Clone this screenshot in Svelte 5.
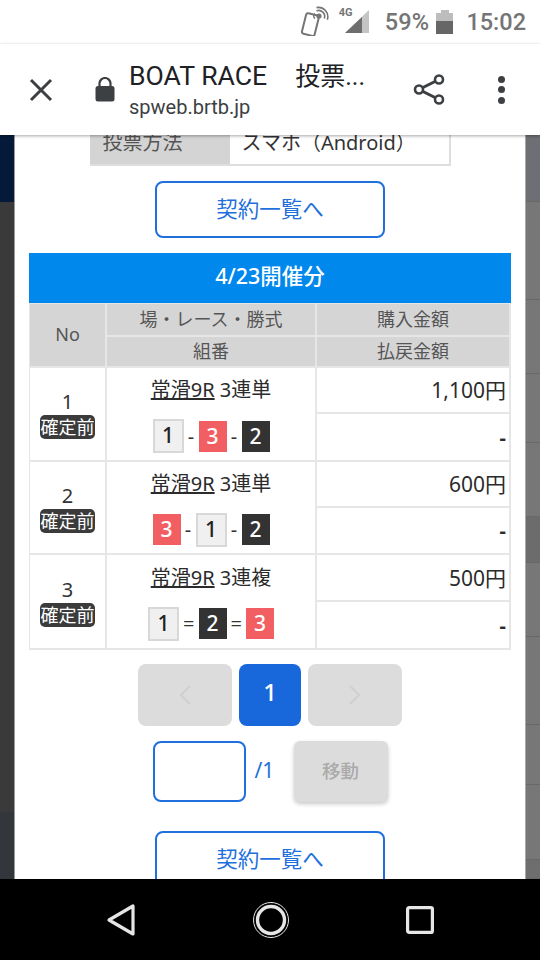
<script>
  const leftStrip = [
    { h: 67, color: "#041a38" },
    { h: 610, color: "#3a3a3a" },
    { h: 67, color: "#33363b" }
  ];
  const rightStrip = [
    { h: 67, color: "#6d6f74" },
    { h: 98, color: "#777777" },
    { h: 74, color: "#777777" },
    { h: 69, color: "#777777" },
    { h: 74, color: "#777777" },
    { h: 46, color: "#6c6c6c" },
    { h: 74, color: "#777777" },
    { h: 88, color: "#777777" },
    { h: 60, color: "#777777" },
    { h: 75, color: "#777777" },
    { h: 19, color: "#6e6e6e" }
  ];

  const rows = [
    { no: 1, bet: "3連単", sep: "-", picks: [1, 3, 2], buy: "1,100円" },
    { no: 2, bet: "3連単", sep: "-", picks: [3, 1, 2], buy: "600円" },
    { no: 3, bet: "3連複", sep: "=", picks: [1, 2, 3], buy: "500円" }
  ];
</script>

<div class="screen">
  <div class="status">
    <svg class="nfc" width="32" height="30" viewBox="0 0 32 30">
      <rect x="5" y="8" width="13" height="21" rx="2" transform="rotate(14 11 18)" fill="none" stroke="#757575" stroke-width="2" />
      <circle cx="20" cy="10" r="2.6" fill="#757575" />
      <path d="M17.5 4.8a6 6 0 0 1 7.8 7.6" fill="none" stroke="#757575" stroke-width="1.6" />
      <path d="M17.5 1.6a9.4 9.4 0 0 1 10.8 12.2" fill="none" stroke="#757575" stroke-width="1.6" />
      <path d="M16 7.6a3 3 0 0 0 0 5" fill="none" stroke="#757575" stroke-width="1.4" />
    </svg>
    <div class="signal">
      <span class="net">4G</span>
      <svg width="24" height="24" viewBox="0 0 24 24">
        <path d="M0 23 24 0v23z" fill="#c4c4c4" />
        <path d="M0 23 17 7v16z" fill="#6e6e6e" />
      </svg>
    </div>
    <span class="pct">59%</span>
    <div class="battery"><div class="battery-cap"></div><div class="battery-body"><div class="battery-fill"></div></div></div>
    <span class="time">15:02</span>
  </div>

  <header class="toolbar">
    <svg class="close" width="24" height="24" viewBox="0 0 24 24">
      <path d="M2 2 22 22M22 2 2 22" stroke="#3c4043" stroke-width="3" fill="none" />
    </svg>
    <svg class="lock" width="20" height="25" viewBox="0 0 20 25">
      <path d="M4.5 10V6.5a5.5 5.5 0 0 1 11 0V10" fill="none" stroke="#3c4043" stroke-width="2.2" />
      <rect x="0.5" y="9" width="19" height="15.5" rx="2.5" fill="#3c4043" />
    </svg>
    <div class="page-title">
      <div class="title">BOAT RACE<span class="title-rest">投票...</span></div>
      <div class="url">spweb.brtb.jp</div>
    </div>
    <svg class="share" width="32" height="33" viewBox="0 0 32 33">
      <path d="M26 6.5 6 16.5l20 10" fill="none" stroke="#3c4043" stroke-width="3" />
      <circle cx="26" cy="6.5" r="4" fill="#fff" stroke="#3c4043" stroke-width="2.6" />
      <circle cx="6" cy="16.5" r="4" fill="#fff" stroke="#3c4043" stroke-width="2.6" />
      <circle cx="26" cy="26.5" r="4" fill="#fff" stroke="#3c4043" stroke-width="2.6" />
    </svg>
    <div class="dots"><i></i><i></i><i></i></div>
  </header>

  <div class="content">
    <div class="strip strip-left">
      {#each leftStrip as s}
        <div class="block" style={`height:${s.h}px;background:${s.color}`}></div>
      {/each}
    </div>

    <main class="main">
      <div class="info">
        <div class="info-label">投票方法</div>
        <div class="info-value">スマホ（Android）</div>
      </div>

      <button class="list-btn">契約一覧へ</button>

      <div class="date-head">4/23開催分</div>

      <div class="grid">
        <div class="cell head span2">No</div>
        <div class="cell head">場・レース・勝式</div>
        <div class="cell head">購入金額</div>
        <div class="cell head col2">組番</div>
        <div class="cell head">払戻金額</div>

        {#each rows as r}
          <div class="cell no span2">
            <span class="no-num">{r.no}</span>
            <span class="state">確定前</span>
          </div>
          <div class="cell course span2">
            <div class="course-name"><u>常滑9R</u> {r.bet}</div>
            <div class="picks">
              {#each r.picks as p, i}
                {#if i > 0}<span class="sep" class:eq={r.sep === "="}>{r.sep}</span>{/if}
                <span class={`pick pick-${p}`}>{p}</span>
              {/each}
            </div>
          </div>
          <div class="cell amount">{r.buy}</div>
          <div class="cell amount payout">-</div>
        {/each}
      </div>

      <div class="pager">
        <div class="page-btn wide">
          <svg width="14" height="22" viewBox="0 0 14 22"><path d="M12 2 3 11l9 9" fill="none" stroke="#cfcfcf" stroke-width="2" /></svg>
        </div>
        <div class="page-btn current">1</div>
        <div class="page-btn wide">
          <svg width="14" height="22" viewBox="0 0 14 22"><path d="M2 2l9 9-9 9" fill="none" stroke="#cfcfcf" stroke-width="2" /></svg>
        </div>
      </div>

      <div class="goto">
        <div class="goto-input"></div>
        <span class="goto-total">/1</span>
        <div class="goto-btn">移動</div>
      </div>

      <button class="list-btn bottom">契約一覧へ</button>
    </main>

    <div class="strip strip-right">
      {#each rightStrip as s}
        <div class="block line" style={`height:${s.h}px;background:${s.color}`}></div>
      {/each}
    </div>
  </div>

  <nav class="navbar">
    <svg width="30" height="34" viewBox="0 0 30 34">
      <path d="M27 3v28L3 17z" fill="none" stroke="#e6e6e6" stroke-width="3.2" stroke-linejoin="round" />
    </svg>
    <svg width="38" height="38" viewBox="0 0 38 38">
      <circle cx="19" cy="19" r="17.5" fill="none" stroke="#e6e6e6" stroke-width="1" />
      <circle cx="19" cy="19" r="13.5" fill="none" stroke="#e6e6e6" stroke-width="3.4" />
    </svg>
    <svg width="28" height="28" viewBox="0 0 28 28">
      <rect x="1.6" y="1.6" width="24.8" height="24.8" rx="1.5" fill="none" stroke="#e6e6e6" stroke-width="3.2" />
    </svg>
  </nav>
</div>

<style>
  :global(body) {
    margin: 0;
  }

  .screen {
    width: 540px;
    height: 960px;
    display: flex;
    flex-direction: column;
    overflow: hidden;
    font-family: "Noto Sans", "Noto Sans CJK JP", sans-serif;
    background: #fff;
  }

  .status {
    height: 44px;
    flex: none;
    display: flex;
    align-items: center;
    justify-content: flex-end;
    padding-right: 14px;
    box-sizing: border-box;
    color: #757575;
    font-family: Roboto, sans-serif;
    font-weight: 500;
  }

  .nfc {
    margin-right: 13px;
    margin-top: -2px;
  }

  .signal {
    position: relative;
    width: 25px;
    height: 24px;
    margin-right: 16px;
  }

  .signal svg {
    position: absolute;
    right: 0;
    top: 0;
  }

  .net {
    position: absolute;
    left: -5px;
    top: -4px;
    font-size: 11px;
    font-weight: 700;
    color: #757575;
    z-index: 1;
  }

  .pct {
    font-size: 23.5px;
    letter-spacing: 0.2px;
  }

  .battery {
    width: 17px;
    margin-left: 7px;
    margin-right: 13px;
    display: flex;
    flex-direction: column;
    align-items: center;
  }

  .battery-cap {
    width: 8px;
    height: 3px;
    background: #bdbdbd;
  }

  .battery-body {
    width: 17px;
    height: 21px;
    background: #bdbdbd;
    display: flex;
    align-items: flex-end;
  }

  .battery-fill {
    width: 100%;
    height: 13px;
    background: #666;
  }

  .time {
    font-size: 23.5px;
  }

  .toolbar {
    height: 91px;
    flex: none;
    display: flex;
    align-items: center;
    background: #fff;
    box-shadow: 0 1px 3px rgba(0, 0, 0, 0.35);
    position: relative;
    z-index: 2;
    padding-left: 29px;
    box-sizing: border-box;
  }

  .lock {
    margin-left: 42px;
  }

  .page-title {
    margin-left: 14px;
    width: 270px;
  }

  .title {
    font-family: Roboto, "Noto Sans CJK JP", sans-serif;
    font-size: 26.6px;
    line-height: 32px;
    color: #202124;
    white-space: nowrap;
  }

  .title-rest {
    margin-left: 28px;
    font-size: 25px;
  }

  .url {
    font-family: Roboto, sans-serif;
    font-size: 20px;
    line-height: 26px;
    color: #3c4043;
    margin-top: 1px;
  }

  .share {
    margin-left: 14px;
  }

  .dots {
    margin-left: 53px;
    display: flex;
    flex-direction: column;
    gap: 3.5px;
  }

  .dots i {
    display: block;
    width: 7px;
    height: 7px;
    border-radius: 50%;
    background: #3c4043;
  }

  .content {
    flex: 1;
    min-height: 0;
    display: flex;
    overflow: hidden;
  }

  .strip {
    width: 15px;
    flex: none;
  }

  .strip-left {
    border-right: 1px solid #9a9a9a;
    box-sizing: border-box;
  }

  .strip-right {
    border-left: 1px solid #a8a8a8;
    box-sizing: border-box;
  }

  .block {
    box-sizing: border-box;
  }

  .line {
    border-bottom: 1px solid #686868;
  }

  .main {
    width: 510px;
    flex: none;
    background: #fff;
    display: flex;
    flex-direction: column;
    align-items: center;
  }

  .info {
    margin-top: -14px;
    flex: none;
    width: 361px;
    height: 45px;
    display: flex;
    font-size: 20px;
    box-sizing: border-box;
    border-bottom: 2px solid #dedede;
  }

  .info-label {
    width: 140px;
    background: #d4d4d4;
    color: #555;
    padding-left: 13px;
    box-sizing: border-box;
    line-height: 43px;
    margin-right: 1px;
  }

  .info-value {
    flex: 1;
    padding-left: 11px;
    color: #333;
    line-height: 43px;
    border-right: 2px solid #dedede;
  }

  .list-btn {
    flex: none;
    display: block;
    width: 230px;
    height: 57px;
    margin-top: 15px;
    background: #fff;
    border: 2px solid #1f6fdc;
    border-radius: 8px;
    color: #1f6fdc;
    font-family: "Noto Sans CJK JP", sans-serif;
    font-size: 21.5px;
    padding: 0 0 4px;
  }

  .list-btn.bottom {
    margin-top: 29px;
  }

  .date-head {
    flex: none;
    width: 482px;
    height: 50px;
    margin-top: 15px;
    background: #0088ec;
    color: #fff;
    font-size: 21.5px;
    font-weight: 500;
    line-height: 46px;
    text-align: center;
  }

  .grid {
    flex: none;
    width: 482px;
    box-sizing: border-box;
    display: grid;
    grid-template-columns: 75px 208px 192px;
    grid-template-rows: 31px 29px 44px 46px 44px 45px 45px 46px;
    gap: 2px;
    padding: 1px 2px 2px 1px;
    background: #e6e6e6;
  }

  .cell {
    background: #fff;
    display: flex;
    align-items: center;
    justify-content: center;
    color: #333;
    min-width: 0;
  }

  .span2 {
    grid-row: span 2;
  }

  .col2 {
    grid-column: 2;
  }

  .head {
    background: #d5d5d5;
    color: #555;
    font-size: 18px;
    padding-bottom: 3px;
    box-sizing: border-box;
  }

  .no {
    flex-direction: column;
  }

  .no-num {
    font-size: 20px;
    line-height: 26px;
  }

  .state {
    width: 55px;
    height: 24px;
    background: #3b3b3b;
    color: #fff;
    border-radius: 5px;
    font-size: 18px;
    line-height: 24px;
    text-align: center;
    white-space: nowrap;
  }

  .course {
    flex-direction: column;
    padding-top: 1px;
    box-sizing: border-box;
  }

  .course-name {
    font-size: 20px;
    line-height: 28px;
    color: #2b2b2b;
  }

  .picks {
    display: flex;
    align-items: center;
    margin-top: 15px;
    height: 34px;
  }

  .sep {
    width: 15px;
    text-align: center;
    font-size: 20px;
  }

  .sep.eq {
    width: 19.5px;
  }

  .pick {
    display: block;
    box-sizing: border-box;
    width: 28px;
    height: 31px;
    font-size: 21px;
    font-weight: 500;
    line-height: 30px;
    text-align: center;
  }

  .pick-1 {
    width: 31px;
    height: 34px;
    background: #f0f0f0;
    border: 2px solid #d8d8d8;
    color: #222;
    line-height: 29px;
  }

  .pick-2 {
    background: #333;
    color: #fff;
  }

  .pick-3 {
    background: #f25f63;
    color: #fff;
  }

  .amount {
    justify-content: flex-end;
    padding: 0 3px 2px 0;
    box-sizing: border-box;
    font-size: 21px;
    color: #2b2b2b;
  }

  .payout {
    font-weight: 700;
    font-size: 20px;
    padding-bottom: 0;
  }

  .pager {
    flex: none;
    display: flex;
    gap: 7px;
    margin-top: 14px;
    height: 62px;
  }

  .page-btn {
    width: 62px;
    border-radius: 8px;
    display: flex;
    align-items: center;
    justify-content: center;
    box-sizing: border-box;
  }

  .page-btn.wide {
    width: 94px;
    background: #dcdcdc;
  }

  .page-btn.current {
    background: #1868dc;
    color: #fff;
    font-size: 24px;
    font-weight: 500;
    padding-bottom: 7px;
  }

  .goto {
    flex: none;
    display: flex;
    align-items: center;
    margin-top: 15px;
    height: 61px;
  }

  .goto-input {
    width: 93px;
    height: 61px;
    box-sizing: border-box;
    border: 2px solid #1f6fdc;
    border-radius: 8px;
  }

  .goto-total {
    width: 48px;
    box-sizing: border-box;
    padding: 0 0 3px 9px;
    color: #1f6fdc;
    font-size: 21px;
  }

  .goto-btn {
    width: 94px;
    height: 61px;
    background: #dcdcdc;
    border-radius: 6px;
    box-shadow: 0 2px 4px rgba(0, 0, 0, 0.22);
    color: #aaa;
    font-size: 18.5px;
    font-weight: 500;
    font-family: "Noto Sans CJK JP", sans-serif;
    line-height: 58px;
    text-align: center;
  }

  .navbar {
    height: 81px;
    flex: none;
    background: #000;
    display: grid;
    grid-template-columns: 30px 38px 28px;
    justify-content: space-between;
    align-items: center;
    padding: 0 106px;
    box-sizing: border-box;
    position: relative;
    z-index: 2;
  }
</style>
